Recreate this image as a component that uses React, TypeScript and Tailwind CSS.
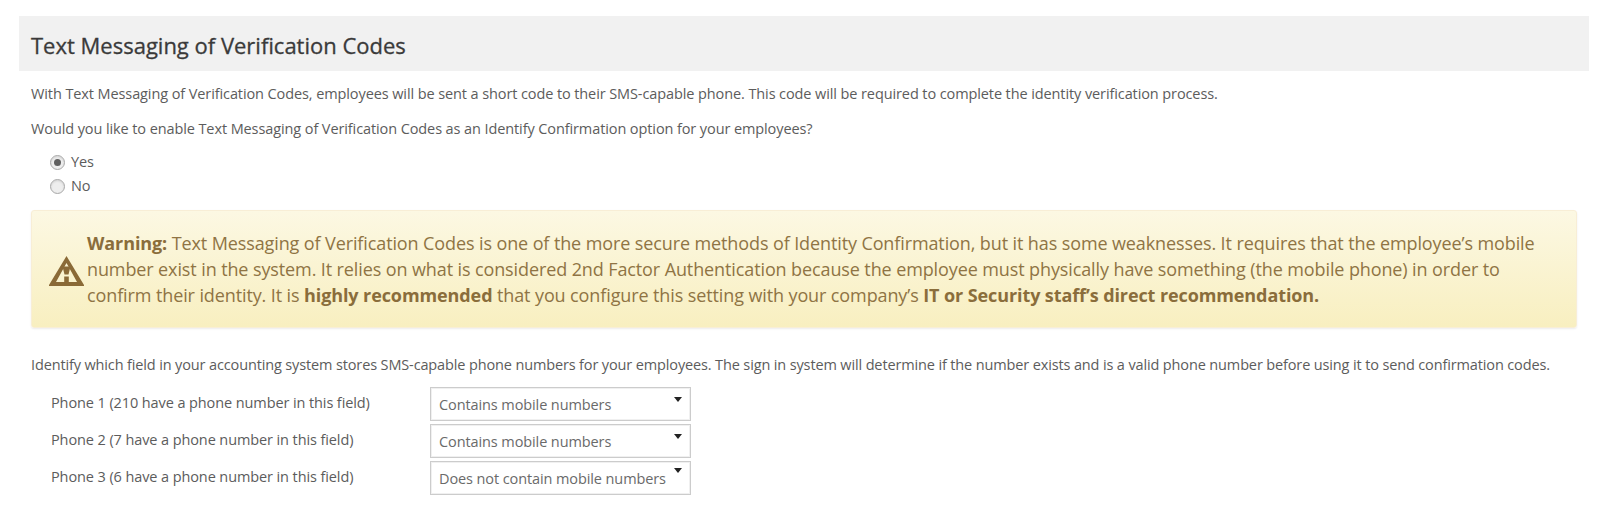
import React from 'react';

function WarningIcon() {
  return (
    <svg width="35" height="30" viewBox="0 0 35 30" className="mt-[3px] shrink-0" aria-hidden="true">
      <path fillRule="evenodd" fill="#8a6a37" d="M17.5 0 L35 29 L35 30 L0 30 L0 29 Z M17.5 7 L7 26 L28 26 Z" />
      <path fill="#8a6a37" d="M13.5 10.5 h8 l-2 8 h-4 Z" />
      <rect x="15.2" y="20.5" width="4.6" height="6" fill="#8a6a37" />
    </svg>
  );
}

function Radio({ checked, label }: { checked?: boolean; label: string }) {
  return (
    <label className="flex h-[24px] items-center">
      <span className="flex h-[15px] w-[15px] items-center justify-center rounded-full border border-[#a8a8a8] bg-[#eeeeee] shadow-[inset_0_1px_2px_rgba(0,0,0,0.12)]">
        {checked && <span className="h-[7px] w-[7px] rounded-full bg-[#606060]" />}
      </span>
      <span className="ml-[6px]">{label}</span>
    </label>
  );
}

const phones = [
  { label: 'Phone 1 (210 have a phone number in this field)', value: 'Contains mobile numbers', arrow: 'top-[9px]' },
  { label: 'Phone 2 (7 have a phone number in this field)', value: 'Contains mobile numbers', arrow: 'top-[9px]' },
  { label: 'Phone 3 (6 have a phone number in this field)', value: 'Does not contain mobile numbers', arrow: 'top-[6px]' },
];

export default function App() {
  return (
    <div className="min-h-[517px] bg-white pt-[16px] pr-[11px] pl-[19px] font-['Open_Sans','Noto_Sans',sans-serif] text-[14.5px] tracking-[-0.1px] text-[#5c5c5c]">
      <h2 className="flex h-[55px] items-center bg-[#f1f1f1] pt-[4px] pl-[12px] text-[22px] font-medium tracking-[0px] text-[#3a3a3a] [-webkit-text-stroke:0.3px_#3a3a3a]">
        Text Messaging of Verification Codes
      </h2>
      <div className="px-[12px]">
        <p className="mt-[12px] leading-[21px]">
          With Text Messaging of Verification Codes, employees will be sent a short code to their SMS-capable phone. This code will be required to complete the identity verification process.
        </p>
        <p className="mt-[14px] leading-[21px]">
          Would you like to enable Text Messaging of Verification Codes as an Identify Confirmation option for your employees?
        </p>
        <div className="mt-[11px] pl-[19px]">
          <Radio checked label="Yes" />
          <Radio label="No" />
        </div>
        <div className="mt-[12px] flex h-[118px] items-center rounded-[3px] border border-[#f8eed6] bg-gradient-to-b from-[#fcf8e3] to-[#f8efc0] pr-[24px] pl-[17px] shadow-[0_1px_2px_rgba(0,0,0,0.08)]">
          <WarningIcon />
          <p className="ml-[3px] text-[18px] leading-[26px] tracking-[-0.11px] text-[#8f7444]">
            <strong className="font-bold tracking-[-0.1px] text-[#8a6d3b]">Warning:</strong> Text Messaging of Verification Codes is one of the more secure methods of Identity Confirmation, but it has some weaknesses. It requires that the employee’s mobile number exist in the system. It relies on what is considered 2nd Factor Authentication because the employee must physically have something (the mobile phone) in order to confirm their identity. It is <strong className="font-bold tracking-[-0.1px] text-[#8a6d3b]">highly recommended</strong> that you configure this setting with your company’s <strong className="font-bold tracking-[-0.1px] text-[#8a6d3b]">IT or Security staff’s direct recommendation.</strong>
          </p>
        </div>
        <p className="mt-[26px] leading-[21px] tracking-[-0.136px] whitespace-nowrap">
          Identify which field in your accounting system stores SMS-capable phone numbers for your employees. The sign in system will determine if the number exists and is a valid phone number before using it to send confirmation codes.
        </p>
        <div className="mt-[12px] flex flex-col gap-[3px]">
          {phones.map((p) => (
            <div key={p.label} className="flex h-[34px] items-start">
              <span className="w-[399px] pt-[5px] pl-[20px] leading-[21px]">{p.label}</span>
              <div className="relative flex h-[34px] w-[261px] items-center border border-[#cccccc] pt-[1px] pl-[8px] shadow-[inset_0_0_0_1px_#f0f0f0]">
                <span className="leading-[21px] text-[#6a6a6a]">{p.value}</span>
                <span className={`absolute right-[8px] h-0 w-0 border-x-[4px] border-t-[5px] border-x-transparent border-t-[#222222] ${p.arrow}`} />
              </div>
            </div>
          ))}
        </div>
      </div>
    </div>
  );
}
